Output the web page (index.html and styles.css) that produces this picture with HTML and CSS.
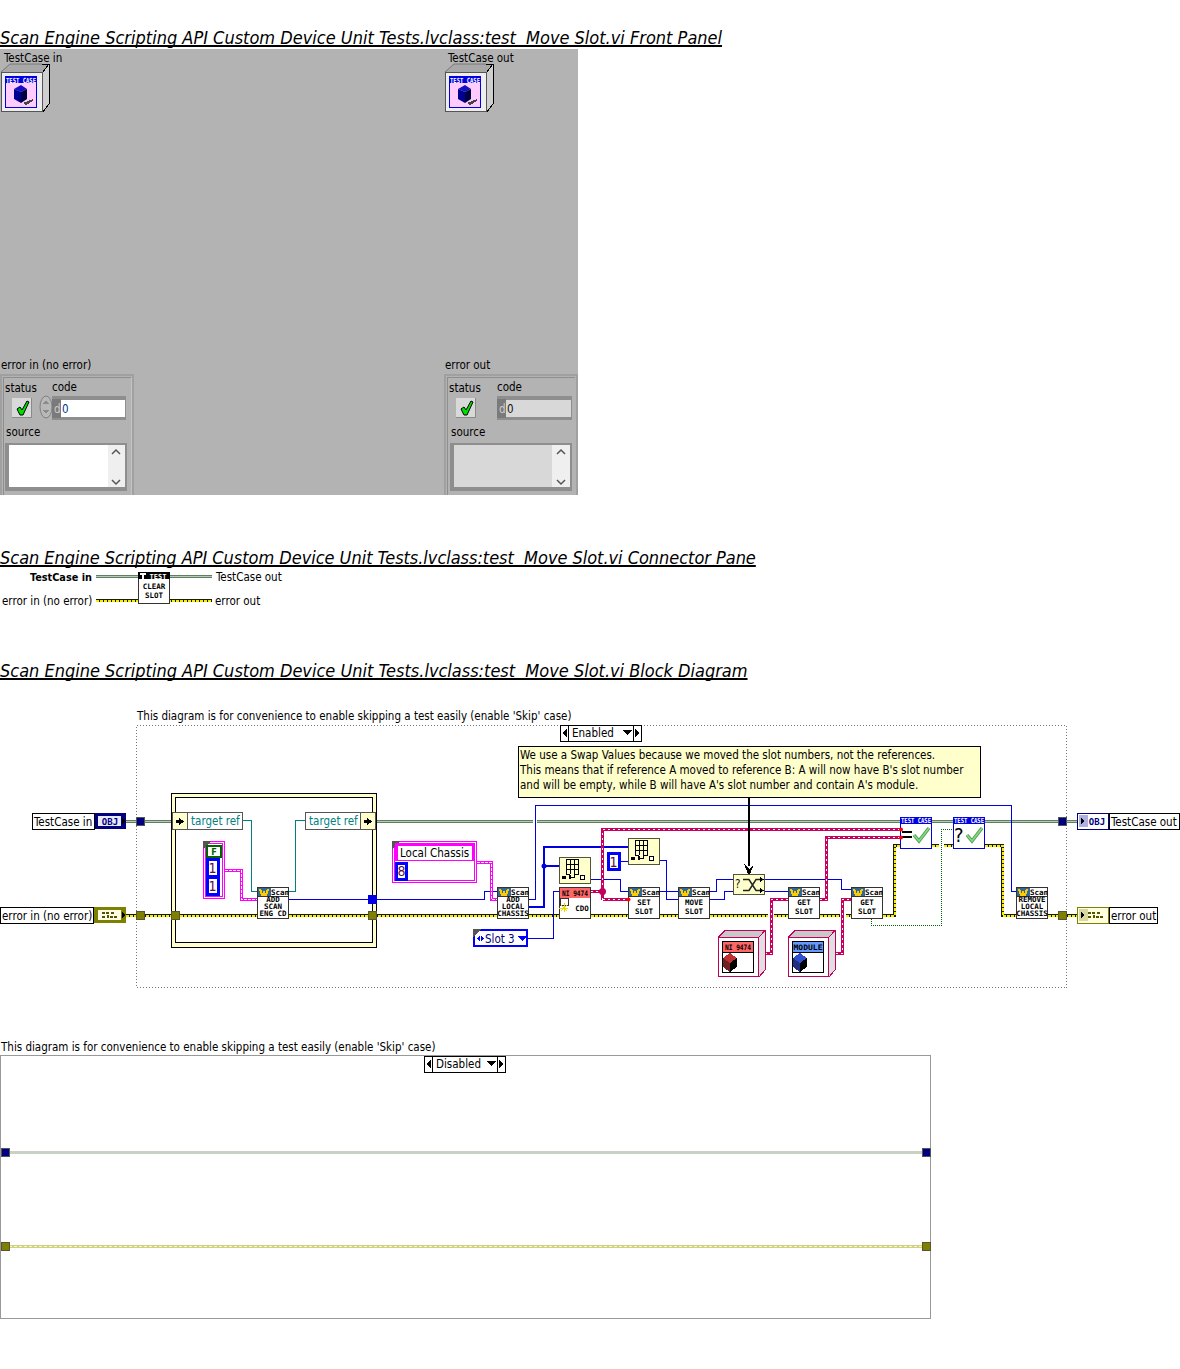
FILE: index.html
```html
<!DOCTYPE html>
<html lang="en">
<head>
<meta charset="utf-8">
<title>test_Move Slot.vi</title>
<link rel="stylesheet" href="styles.css">
</head>
<body>
<main class="report">
<h2 class="vi-title first">Scan Engine Scripting API Custom Device Unit Tests.lvclass:test  Move Slot.vi Front Panel</h2>
<svg class="canvas panel-canvas" viewBox="0 49 1180 446" width="1180" height="446" xmlns="http://www.w3.org/2000/svg">
  <defs>
    <g id="tc-indicator">
      <path class="box-top" d="M1 72 L10 64 H49 L43 72 Z"/>
      <path class="box-side" d="M43 72 L49 64 V104 L43 112 Z"/>
      <path class="edge-soft" d="M1 72 L10 64 H42"/>
      <path class="line" d="M42 64 H49 L43 72 M49 64 V104 L43 112"/>
      <rect class="box-front" x="1.500" y="72.500" width="41" height="39"/>
      <rect class="tc-img" x="5.500" y="76.500" width="31" height="31"/>
      <rect class="fill-blue" x="5" y="76" width="32" height="7"/>
      <text class="tiny-w" x="21" y="82.500" textLength="30" lengthAdjust="spacingAndGlyphs">TEST CASE</text>
      <path class="cube-top" d="M21 85 L27 89 L21 92 L14 89 Z"/>
      <path class="cube-left" d="M14 89 L21 92 V103 L14 99 Z"/>
      <path class="cube-right" d="M27 89 L21 92 V103 L27 99 Z"/>
      <path class="shadow" d="M23 103 L33 99 V101 L26 105 Z"/>
    </g>
    <g id="check">
      <path class="check-mark" d="M3 9 L6 7 L8 10 L13 1 L15 2 L9 15 L6 15 Z"/>
    </g>
    <path id="up" class="chev" d="M0 4 L4 0 L8 4"/>
    <path id="down" class="chev" d="M0 0 L4 4 L8 0"/>
  </defs>
  <rect class="panel-bg" x="0" y="49" width="578" height="446"/>

  <text class="t12" x="4" y="62">TestCase in</text>
  <use href="#tc-indicator"/>
  <text class="t12" x="448" y="62">TestCase out</text>
  <use href="#tc-indicator" x="444"/>

  <!-- error in -->
  <text class="t12" x="1" y="369">error in (no error)</text>
  <path class="bevel-hi" d="M1 495 V375 H133 V495"/>
  <path class="bevel-dk" d="M3 495 V377.500 H131"/>
  <path class="bevel-lt" d="M131.500 378 V495"/>
  <text class="t12" x="5" y="392">status</text>
  <text class="t12" x="52" y="391">code</text>
  <rect class="btn" x="12" y="398" width="19" height="19"/>
  <path class="btn-shade" d="M12 417.500 H31.500 V398"/>
  <use href="#check" x="14" y="400"/>
  <ellipse class="spin" cx="46" cy="407" rx="6" ry="11"/>
  <path class="spin-arrow" d="M46 400 L43 404 H49 Z M46 414 L43 410 H49 Z"/>
  <rect class="field-bevel" x="52" y="396" width="74" height="24"/>
  <rect class="field-radix" x="52" y="399" width="9" height="19"/>
  <rect class="field-white" x="61" y="400" width="64" height="17"/>
  <text class="t12-gray" x="54" y="413">d</text>
  <text class="t12-blue" x="62" y="413">0</text>
  <text class="t12" x="6" y="436">source</text>
  <rect class="field-bevel" x="5" y="443" width="122" height="48"/>
  <rect class="field-white" x="9" y="445" width="99" height="42"/>
  <rect class="scroll" x="108" y="445" width="17" height="42"/>
  <use href="#up" x="112" y="450"/>
  <use href="#down" x="112" y="480"/>

  <!-- error out -->
  <text class="t12" x="445" y="369">error out</text>
  <path class="bevel-hi" d="M445 495 V375 H577 V495"/>
  <path class="bevel-dk" d="M447 495 V377.500 H575"/>
  <text class="t12" x="449" y="392">status</text>
  <text class="t12" x="497" y="391">code</text>
  <rect class="btn" x="456" y="398" width="19" height="19"/>
  <path class="btn-shade" d="M456 417.500 H475.500 V398"/>
  <use href="#check" x="458" y="400"/>
  <rect class="field-bevel" x="497" y="396" width="75" height="24"/>
  <rect class="field-radix" x="497" y="399" width="9" height="19"/>
  <rect class="field-ind" x="506" y="400" width="65" height="17"/>
  <text class="t12-gray" x="499" y="413">d</text>
  <text class="t12-dk" x="507" y="413">0</text>
  <text class="t12" x="451" y="436">source</text>
  <rect class="field-bevel" x="450" y="443" width="122" height="48"/>
  <rect class="field-ind" x="454" y="445" width="98" height="42"/>
  <rect class="scroll" x="552" y="445" width="18" height="42"/>
  <use href="#up" x="557" y="450"/>
  <use href="#down" x="557" y="480"/>
</svg>

<h2 class="vi-title second">Scan Engine Scripting API Custom Device Unit Tests.lvclass:test  Move Slot.vi Connector Pane</h2>
<svg class="canvas pane-canvas" viewBox="0 568 1180 42" width="1180" height="42" xmlns="http://www.w3.org/2000/svg">
  <text class="t12-b" x="30" y="581">TestCase in</text>
  <text class="t12" x="216" y="581">TestCase out</text>
  <text class="t12" x="2" y="605">error in (no error)</text>
  <text class="t12" x="215" y="605">error out</text>
  <path class="w-obj" d="M96 576.500 H212"/>
  <path class="w-obj-c" d="M96 576.500 H212"/>
  <path class="w-err" d="M96 600.500 H212"/>
  <path class="w-err-c" d="M96 600.500 H212"/>
  <rect class="node" x="138.500" y="572.500" width="31" height="31"/>
  <rect class="fill-black" x="138" y="572" width="32" height="7"/>
  <path class="pane-t" d="M140 573 H146 V575 H144 V582 H142 V575 H140 Z"/>
  <text class="tiny-w" x="158" y="578.500">TEST</text>
  <text class="mono" x="154" y="589">CLEAR</text>
  <text class="mono" x="154" y="598">SLOT</text>
</svg>

<h2 class="vi-title third">Scan Engine Scripting API Custom Device Unit Tests.lvclass:test  Move Slot.vi Block Diagram</h2>
<svg class="canvas diagram-canvas" viewBox="0 681 1180 320" width="1180" height="320" xmlns="http://www.w3.org/2000/svg">
  <defs>
    <g id="scan-head">
      <rect class="head-bg" x="0.500" y="0.500" width="31" height="9"/>
      <rect class="head-blue" x="1" y="1" width="13" height="8"/>
      <path class="head-v" d="M3 2 L5 8 H6 L7 4 L8 8 H9 L11 2" />
      <text class="tiny-k" x="23" y="8">Scan</text>
    </g>
    <g id="array-node">
      <rect class="y-node" x="0.500" y="0.500" width="31" height="26"/>
      <path class="grid" d="M7 2.500 H19 V17 H15 V20 H10 V17 H7 Z M7 7 H19 M7 12 H19 M11 2.500 V17 M15 2.500 V17"/>
      <rect class="fill-black" x="3" y="19" width="4" height="3"/>
      <path class="grid" d="M10 21 H12 M11 18 V21"/>
      <rect class="open-sq" x="21.500" y="18.500" width="4" height="4"/>
    </g>
    <g id="const-box">
      <path class="box-top-c" d="M0 7 L7 0 H47 L41 7 Z"/>
      <path class="box-side-c" d="M41 7 L47 0 V40 L41 47 Z"/>
      <path class="rim" d="M0.500 7 L7 0.500 H47 L41 7 M47 0.500 V40 L41 47"/>
      <rect class="rim-front" x="0.500" y="7.500" width="40" height="39"/>
      <rect class="cell" x="4.500" y="11.500" width="31" height="31"/>
    </g>
    <path id="arrow-r" class="fill-black" d="M0 0 L5 4 L0 8 Z"/>
    <path id="arrow-l" class="fill-black" d="M5 0 L0 4 L5 8 Z"/>
    <g id="tunnel-blue"><rect class="tun-b" x="0.500" y="0.500" width="8" height="8"/></g>
    <g id="tunnel-err"><rect class="tun-e" x="0.500" y="0.500" width="8" height="8"/></g>
  </defs>

  <text class="t12" x="137" y="720">This diagram is for convenience to enable skipping a test easily (enable 'Skip' case)</text>
  <rect class="frame-dots" x="136.500" y="725.500" width="930" height="262"/>

  <!-- selector -->
  <rect class="sel" x="560.500" y="725.500" width="81" height="16"/>
  <path class="line" d="M568.500 725 V741 M633.500 725 V741"/>
  <use href="#arrow-l" x="562" y="729"/>
  <use href="#arrow-r" x="635" y="729"/>
  <text class="t12" x="572" y="737">Enabled</text>
  <path class="fill-black" d="M623 730 H632 L627.500 735 Z"/>

  <!-- comment -->
  <rect class="comment" x="518.500" y="746.500" width="462" height="51"/>
  <text class="t12" x="520" y="759">We use a Swap Values because we moved the slot numbers, not the references.</text>
  <text class="t12" x="520" y="774">This means that if reference A moved to reference B: A will now have B's slot number</text>
  <text class="t12" x="520" y="789">and will be empty, while B will have A's slot number and contain A's module.</text>

  <!-- main wires -->
  <path class="w-obj" d="M126 821.500 H171 M377 821.500 H533 M537 821.500 H1077"/>
  <path class="w-obj-c" d="M126 821.500 H171 M377 821.500 H533 M537 821.500 H1077"/>
  <path class="w-err" d="M126 915.500 H497 M529 915.500 H559 M591 915.500 H628 M660 915.500 H678 M710 915.500 H768 M774 915.500 H788 M820 915.500 H840 M846 915.500 H851 M883 915.500 H894.500 V845.500 H900 M932 845.500 H939 M944 845.500 H953 M985 845.500 H1002.500 V915.500 H1016 M1048 915.500 H1077"/>
  <path class="w-err-c" d="M126 915.500 H497 M529 915.500 H559 M591 915.500 H628 M660 915.500 H678 M710 915.500 H768 M774 915.500 H788 M820 915.500 H840 M846 915.500 H851 M883 915.500 H894.500 V845.500 H900 M932 845.500 H939 M944 845.500 H953 M985 845.500 H1002.500 V915.500 H1016 M1048 915.500 H1077"/>

  <!-- frame / structure -->
  <rect class="struct" x="171.500" y="793.500" width="205" height="154"/>
  <rect class="struct-in" x="175.500" y="797.500" width="197" height="145"/>
  <path class="w-err" d="M176 915.500 H258 M289 915.500 H372"/>
  <path class="w-err-c" d="M176 915.500 H258 M289 915.500 H372"/>

  <!-- property nodes -->
  <rect class="prop-arrow" x="172.500" y="812.500" width="15" height="17"/>
  <rect class="prop-name" x="187.500" y="812.500" width="55" height="17"/>
  <path class="fill-black" d="M176 820 H179 V818 L184 821.500 L179 825 V823 H176 Z"/>
  <text class="t12-teal" x="191" y="825">target ref</text>
  <rect class="prop-name" x="305.500" y="812.500" width="55" height="17"/>
  <rect class="prop-arrow" x="360.500" y="812.500" width="15" height="17"/>
  <path class="fill-black" d="M364 820 H367 V818 L372 821.500 L367 825 V823 H364 Z"/>
  <text class="t12-teal" x="309" y="825">target ref</text>

  <!-- thin wires -->
  <path class="w-teal" d="M243 820.500 H251.500 V891.500 H258 M288 891.500 H295.500 V820.500 H305"/>
  <path class="w-ref" d="M289 899.500 H372 M377 899.500 H484.500 V891.500 H497"/>
  <path class="w-ref" d="M529 899.500 H535.500 V805.500 H1011.500 V891.500 H1016"/>
  <path class="w-ref-b" d="M529 906.500 H544 V847 H628"/>
  <path class="w-ref-b" d="M544 866 H559"/>
  <circle class="dot-b" cx="544" cy="866" r="2.500"/>
  <path class="w-ref" d="M591 879.500 H620.500 V891.500 H628"/>
  <path class="w-ref" d="M620 861.500 H628"/>
  <path class="w-ref" d="M660 860.500 H666.500 V899.500 H678"/>
  <path class="w-ref" d="M660 891.500 H678"/>
  <path class="w-ref" d="M710 891.500 H716.500 V879.500 H733"/>
  <path class="w-ref" d="M710 899.500 H724.500 V891.500 H733"/>
  <path class="w-ref" d="M765 879.500 H841.500 V889.500 H851"/>
  <path class="w-ref" d="M765 891.500 H788"/>
  <path class="w-ref" d="M528 938.500 H553.500 V891.500 H559"/>
  <path class="w-dot-g" d="M871.500 919 V925.500 H941.500 V829.500 H953"/>

  <!-- class wires -->
  <g>
    <path class="w-cls" d="M591 891.500 H602.500 M602.500 899.500 H628 M602.500 899.500 V829.500 H900 M820 899.500 H826.500 V837.500 H900 M765 953.500 H771.500 V899.500 H788 M836 953.500 H842.500 V899.500 H851"/>
    <path class="w-cls-c" d="M591 891.500 H602.500 M602.500 899.500 H628 M602.500 899.500 V829.500 H900 M820 899.500 H826.500 V837.500 H900 M765 953.500 H771.500 V899.500 H788 M836 953.500 H842.500 V899.500 H851"/>
    <circle class="dot-c" cx="602.500" cy="891.500" r="3.500"/>
  </g>
  <!-- cluster wires -->
  <path class="w-pink" d="M225 870.500 H241.500 V899.500 H258"/>
  <path class="w-pink-c" d="M225 870.500 H241.500 V899.500 H258"/>
  <path class="w-pink" d="M477 862.500 H491.500 V899.500 H497"/>
  <path class="w-pink-c" d="M477 862.500 H491.500 V899.500 H497"/>

  <!-- comment arrow -->
  <path class="w-black" d="M749 797 V866"/>
  <path class="fill-black" d="M744 864 L749 869 L754 864 L750 874 H748 Z"/>

  <!-- cluster constant -->
  <rect class="clu" x="203.500" y="841.500" width="21" height="57"/>
  <rect class="clu-in" x="205.500" y="843.500" width="17" height="53"/>
  <path class="corner" d="M203 841 H211 L203 849 Z"/>
  <rect class="bool" x="207" y="846" width="14" height="11"/>
  <text class="bool-t" x="214" y="855">F</text>
  <rect class="num-blue" x="207.500" y="859.500" width="11" height="17"/>
  <rect class="num-blue" x="207.500" y="877.500" width="11" height="17"/>
  <text class="t14-purple" x="212.500" y="873">1</text>
  <text class="t14-purple" x="212.500" y="891">1</text>

  <!-- local chassis constant -->
  <rect class="clu" x="392.500" y="841.500" width="84" height="41"/>
  <rect class="clu-in" x="394.500" y="843.500" width="80" height="37"/>
  <path class="corner" d="M392 841 H400 L392 849 Z"/>
  <rect class="pink-band" x="395" y="843" width="79" height="18"/>
  <rect class="cell-plain" x="398" y="846" width="74" height="14"/>
  <text class="t12" x="400" y="857">Local Chassis</text>
  <rect class="num-blue" x="396.500" y="863.500" width="10" height="16"/>
  <text class="t14-purple" x="401.500" y="876">8</text>

  <!-- slot ring -->
  <rect class="ring" x="474" y="930" width="53" height="16"/>
  <path class="corner" d="M473 929 H481 L473 937 Z"/>
  <path class="blue-fill" d="M477 938.500 L480 935 V942 Z M484 938.500 L481 935 V942 Z"/>
  <text class="t12-navy" x="485" y="943">Slot 3</text>
  <path class="blue-fill" d="M518 936 H527 L522.500 941 Z"/>

  <!-- tunnels -->
  <use href="#tunnel-blue" x="136" y="817"/>
  <use href="#tunnel-err" x="136" y="911"/>
  <use href="#tunnel-err" x="171" y="911"/>
  <use href="#tunnel-err" x="368" y="911"/>
  <rect class="tun-sb" x="368" y="895" width="9" height="9"/>
  <use href="#tunnel-blue" x="1058" y="817"/>
  <use href="#tunnel-err" x="1058" y="911"/>

  <!-- scan nodes -->
  <g transform="translate(257 887)">
    <rect class="node" x="0.500" y="0.500" width="31" height="31"/>
    <use href="#scan-head"/>
    <text class="mono" x="16" y="15">ADD</text><text class="mono" x="16" y="22">SCAN</text><text class="mono" x="16" y="29">ENG CD</text>
  </g>
  <g transform="translate(497 887)">
    <rect class="node" x="0.500" y="0.500" width="31" height="31"/>
    <use href="#scan-head"/>
    <text class="mono" x="16" y="15">ADD</text><text class="mono" x="16" y="22">LOCAL</text><text class="mono" x="16" y="29">CHASSIS</text>
  </g>
  <g transform="translate(628 887)">
    <rect class="node" x="0.500" y="0.500" width="31" height="31"/>
    <use href="#scan-head"/>
    <text class="mono" x="16" y="18">SET</text><text class="mono" x="16" y="27">SLOT</text>
  </g>
  <g transform="translate(678 887)">
    <rect class="node" x="0.500" y="0.500" width="31" height="31"/>
    <use href="#scan-head"/>
    <text class="mono" x="16" y="18">MOVE</text><text class="mono" x="16" y="27">SLOT</text>
  </g>
  <g transform="translate(788 887)">
    <rect class="node" x="0.500" y="0.500" width="31" height="31"/>
    <use href="#scan-head"/>
    <text class="mono" x="16" y="18">GET</text><text class="mono" x="16" y="27">SLOT</text>
  </g>
  <g transform="translate(851 887)">
    <rect class="node" x="0.500" y="0.500" width="31" height="31"/>
    <use href="#scan-head"/>
    <text class="mono" x="16" y="18">GET</text><text class="mono" x="16" y="27">SLOT</text>
  </g>
  <g transform="translate(1016 887)">
    <rect class="node" x="0.500" y="0.500" width="31" height="31"/>
    <use href="#scan-head"/>
    <text class="mono" x="16" y="15">REMOVE</text><text class="mono" x="16" y="22">LOCAL</text><text class="mono" x="16" y="29">CHASSIS</text>
  </g>

  <!-- CDO node -->
  <g transform="translate(559 887)">
    <rect class="node" x="0.500" y="0.500" width="31" height="31"/>
    <rect class="head-red" x="1" y="1" width="30" height="10"/>
    <text class="mono" x="16" y="8.500" textLength="26" lengthAdjust="spacingAndGlyphs">NI 9474</text>
    <rect class="open-sq-t" x="1" y="11" width="8" height="7"/>
    <path class="star" d="M0 21 H9 M5 16 V25 M2 18 L8 24 M8 18 L2 24"/>
    <text class="mono" x="23" y="24">CDO</text>
  </g>

  <!-- array nodes -->
  <use href="#array-node" x="559" y="857"/>
  <use href="#array-node" x="628" y="838"/>
  <rect class="num-blue" x="608.500" y="853.500" width="11" height="16"/>
  <text class="t14-purple" x="613.500" y="867">1</text>

  <!-- swap -->
  <rect class="y-node" x="733.500" y="874.500" width="31" height="20"/>
  <path class="swap" d="M743 879.500 H749 L756 890.500 H763 M743 890.500 H749 L756 879.500 H763"/>
  <path class="fill-black" d="M760 877 L764 879.500 L760 882 Z M760 888 L764 890.500 L760 893 Z"/>
  <text class="t12-dk" x="735" y="888">?</text>

  <!-- assert nodes -->
  <g transform="translate(900 817)">
    <rect class="node-b" x="0.500" y="0.500" width="31" height="31"/>
    <rect class="fill-blue" x="0" y="0" width="32" height="7"/>
    <text class="tiny-w" x="16" y="6" textLength="30" lengthAdjust="spacingAndGlyphs">TEST CASE</text>
    <path class="eq" d="M2 15 H12 M2 20 H12"/>
    <path class="tick" d="M14 18 L19 24 L29 11" />
    <path class="tick-c" d="M14 18 L19 24 L29 11" />
    <circle class="dot-r" cx="1" cy="12.500" r="2"/>
    <circle class="dot-r" cx="1" cy="20.500" r="2"/>
  </g>
  <g transform="translate(953 817)">
    <rect class="node-b" x="0.500" y="0.500" width="31" height="31"/>
    <rect class="fill-blue" x="0" y="0" width="32" height="7"/>
    <text class="tiny-w" x="16" y="6" textLength="30" lengthAdjust="spacingAndGlyphs">TEST CASE</text>
    <text class="q-mark" x="1" y="25">?</text>
    <path class="tick" d="M14 18 L19 24 L29 11" />
    <path class="tick-c" d="M14 18 L19 24 L29 11" />
  </g>
  <circle class="dot-r" cx="628.500" cy="899.500" r="2"/>

  <!-- class constants -->
  <g transform="translate(718 930)">
    <use href="#const-box"/>
    <rect class="head-red" x="5" y="12" width="30" height="10"/>
    <path class="line" d="M5 22.500 H36"/>
    <text class="mono" x="20" y="20" textLength="26" lengthAdjust="spacingAndGlyphs">NI 9474</text>
    <path class="cr-top" d="M5 28 L12 23 L19 28 L12 33 Z"/>
    <path class="cr-left" d="M5 28 L12 33 V42 L5 37 Z"/>
    <path class="fill-black" d="M19 28 L12 33 V42 L19 37 Z"/>
  </g>
  <g transform="translate(788 930)">
    <use href="#const-box"/>
    <rect class="head-sky" x="5" y="12" width="30" height="10"/>
    <path class="line" d="M5 22.500 H36"/>
    <text class="mono" x="20" y="20" textLength="29" lengthAdjust="spacingAndGlyphs">MODULE</text>
    <path class="cb-top" d="M5 28 L12 23 L19 28 L12 33 Z"/>
    <path class="cb-left" d="M5 28 L12 33 V42 L5 37 Z"/>
    <path class="fill-black" d="M19 28 L12 33 V42 L19 37 Z"/>
  </g>

  <!-- terminals -->
  <rect class="lbl" x="32.500" y="813.500" width="62" height="16"/>
  <text class="t12" x="34" y="826">TestCase in</text>
  <rect class="term-b" x="95" y="813" width="31" height="16"/>
  <rect class="term-bi" x="97.500" y="815.500" width="24" height="11"/>
  <text class="obj" x="110" y="825">OBJ</text>
  <path class="fill-black" d="M122 818 L125 821 L122 824 Z"/>

  <rect class="lbl" x="0.500" y="907.500" width="93" height="16"/>
  <text class="t12" x="2" y="920">error in (no error)</text>
  <rect class="term-e" x="94" y="907" width="32" height="16"/>
  <rect class="term-ei" x="97.500" y="909.500" width="24" height="11"/>
  <path class="term-icon" d="M102 913 H108 V917 H117 M102 917 H106 M111 913 H115"/>
  <path class="fill-black" d="M122 912 L125 915 L122 918 Z"/>

  <rect class="term-out-b" x="1077.500" y="813.500" width="31" height="16"/>
  <rect class="term-shade-b" x="1079" y="815" width="9" height="12"/>
  <path class="fill-black" d="M1081 818 L1084 821 L1081 824 Z"/>
  <text class="obj" x="1097" y="825">OBJ</text>
  <rect class="lbl" x="1109.500" y="813.500" width="70" height="16"/>
  <text class="t12" x="1111" y="826">TestCase out</text>

  <rect class="term-out-e" x="1077.500" y="907.500" width="31" height="16"/>
  <rect class="term-shade-e" x="1079" y="909" width="9" height="12"/>
  <path class="fill-black" d="M1081 912 L1084 915 L1081 918 Z"/>
  <path class="term-icon" d="M1088 913 H1094 V917 H1103 M1088 917 H1092 M1097 913 H1101"/>
  <rect class="lbl" x="1109.500" y="907.500" width="48" height="16"/>
  <text class="t12" x="1111" y="920">error out</text>
</svg>

<svg class="canvas case-canvas" viewBox="0 1040 1180 329" width="1180" height="329" xmlns="http://www.w3.org/2000/svg">
  <text class="t12" x="1" y="1051">This diagram is for convenience to enable skipping a test easily (enable 'Skip' case)</text>
  <rect class="frame-solid" x="0.500" y="1055.500" width="930" height="263"/>
  <rect class="sel" x="424.500" y="1056.500" width="81" height="16"/>
  <path class="line" d="M432.500 1056 V1072 M497.500 1056 V1072"/>
  <use href="#arrow-l" x="426" y="1060"/>
  <use href="#arrow-r" x="499" y="1060"/>
  <text class="t12" x="436" y="1068">Disabled</text>
  <path class="fill-black" d="M487 1061 H496 L491.500 1066 Z"/>
  <path class="w-obj-off" d="M9 1152.500 H922"/>
  <path class="w-err-off" d="M9 1246.500 H922"/>
  <path class="w-err-off-c" d="M9 1246.500 H922"/>
  <use href="#tunnel-blue" x="1" y="1148"/>
  <use href="#tunnel-blue" x="922" y="1148"/>
  <use href="#tunnel-err" x="1" y="1242"/>
  <use href="#tunnel-err" x="922" y="1242"/>
</svg>
</main>
</body>
</html>
```

FILE: styles.css
```css
* { box-sizing: border-box; }
html, body { margin: 0; padding: 0; background: #fff; }
body { font-family: "DejaVu Sans", "Noto Sans", sans-serif; font-stretch: condensed; }
.report { width: 1180px; height: 1369px; overflow: hidden; }
.vi-title {
  margin: 0; height: 20px; font-size: 18px; line-height: 20px; font-weight: 400; font-style: italic;
  white-space: pre; color: #000; font-family: "DejaVu Sans", sans-serif; font-stretch: condensed;
  text-decoration: underline; text-decoration-thickness: 2px; text-underline-offset: 1px;
  text-decoration-skip-ink: none;
}
.first { margin-top: 28px; margin-bottom: 1px; }
.second { margin-top: 53px; letter-spacing: -0.03px; }
.third { margin-top: 51px; letter-spacing: -0.01px; }
.canvas { display: block; }
.case-canvas { margin-top: 39px; }

.canvas rect, .canvas path { shape-rendering: crispEdges; }
.canvas path.tick, .canvas path.tick-c, .canvas path.check-mark, .canvas path.chev, .canvas path.swap,
.canvas path.cube-top, .canvas path.cube-left, .canvas path.cube-right, .canvas path.box-top, .canvas path.box-side,
.canvas path.edge-soft { shape-rendering: auto; }

text { font-family: "DejaVu Sans", sans-serif; font-stretch: condensed; font-size: 11.500px; fill: #000; white-space: pre; }
.t12 { fill: #000; }
.t12-b { font-weight: 700; font-size: 10.800px; }
.t12-gray { fill: #ccc; }
.t12-blue { fill: #003399; }
.t12-dk { fill: #111; }
.t12-teal { fill: #008080; }
.t12-navy { fill: #000080; }
.t14-purple { font-size: 14px; fill: #5a1040; text-anchor: middle; }
.tiny-w { font-size: 7px; font-weight: 700; fill: #fff; text-anchor: middle; font-family: "DejaVu Sans Mono", monospace; }
.tiny-k { font-size: 7.500px; font-weight: 700; fill: #000; text-anchor: middle; font-family: "DejaVu Sans Mono", monospace; }
.mono { font-size: 7.500px; fill: #000; text-anchor: middle; font-family: "DejaVu Sans Mono", monospace; font-weight: 700; }
.obj { font-size: 9px; font-weight: 700; fill: #000080; text-anchor: middle; font-family: "DejaVu Sans Mono", monospace; }
.bool-t { font-size: 9px; font-weight: 700; fill: #006400; text-anchor: middle; }
.q-mark { font-size: 20px; fill: #000; }

.panel-bg { fill: #b3b3b3; }
.line { fill: none; stroke: #000; stroke-width: 1; }
.edge-soft { fill: none; stroke: #777; stroke-width: 1; }
.fill-black { fill: #000; }
.fill-blue { fill: #0000e0; }
.blue-fill { fill: #0000ff; }
.box-top { fill: #a8a8a8; }
.box-side { fill: #cfcfcf; }
.box-front { fill: #eee; stroke: #555; stroke-width: 1; }
.tc-img { fill: #ffccff; stroke: #0000e0; stroke-width: 1; }
.cube-top { fill: #1010c0; }
.cube-left { fill: #000090; }
.cube-right { fill: #000040; }
.shadow { fill: #444; }
.check-mark { fill: #00e000; stroke: #000; stroke-width: 1; }
.chev { fill: none; stroke: #555; stroke-width: 1.500; }

.bevel-hi { fill: none; stroke: #a0a0a0; stroke-width: 2; }
.bevel-dk { fill: none; stroke: #8e8e8e; stroke-width: 1; }
.bevel-lt { fill: none; stroke: #c4c4c4; stroke-width: 1; }
.btn { fill: #d9d9d9; }
.btn-shade { fill: none; stroke: #8a8a8a; stroke-width: 1; }
.spin { fill: #b8b8b8; stroke: #808080; stroke-width: 1; }
.spin-arrow { fill: #8a8a8a; }
.field-bevel { fill: #8e8e8e; }
.field-radix { fill: #7a7a7a; }
.field-white { fill: #fff; }
.field-ind { fill: #d8d8d8; }
.scroll { fill: #efefef; }

.w-obj { fill: none; stroke: #5f8060; stroke-width: 3; }
.w-obj-c { fill: none; stroke: #b9c9b9; stroke-width: 1; }
.w-obj-off { fill: none; stroke: #c9d1c4; stroke-width: 3; }
.w-err { fill: none; stroke: #1a1a00; stroke-width: 3; }
.w-err-c { fill: none; stroke: #f4f000; stroke-width: 2; stroke-dasharray: 3 1; }
.w-err-off { fill: none; stroke: #cfcf90; stroke-width: 3; }
.w-err-off-c { fill: none; stroke: #ffff99; stroke-width: 1; stroke-dasharray: 3 2; }
.w-teal { fill: none; stroke: #008080; stroke-width: 1; }
.w-ref { fill: none; stroke: #0000e0; stroke-width: 1; }
.w-ref-b { fill: none; stroke: #0000e0; stroke-width: 2; }
.dot-b { fill: #0000e0; }
.w-dot-g { fill: none; stroke: #006400; stroke-width: 1; stroke-dasharray: 1 1; }
.w-cls { fill: none; stroke: #c8005f; stroke-width: 3; }
.w-cls-c { fill: none; stroke: #fff; stroke-width: 1; stroke-dasharray: 2 3; }
.dot-c { fill: #c0005a; }
.dot-r { fill: #ff0000; }
.w-pink { fill: none; stroke: #ff00ff; stroke-width: 3; }
.w-pink-c { fill: none; stroke: #fff; stroke-width: 1; stroke-dasharray: 3 1; }
.w-black { fill: none; stroke: #000; stroke-width: 2; }

.frame-dots { fill: none; stroke: #777; stroke-width: 1; stroke-dasharray: 1 2; }
.frame-solid { fill: #fff; stroke: #999; stroke-width: 1; }
.sel { fill: #fff; stroke: #000; stroke-width: 1; }
.comment { fill: #ffffcc; stroke: #000; stroke-width: 1; }
.struct { fill: #ffffcc; stroke: #000; stroke-width: 1; }
.struct-in { fill: #fff; stroke: #000; stroke-width: 1; }
.prop-arrow { fill: #ffffcc; stroke: #555; stroke-width: 1; }
.prop-name { fill: #fff; stroke: #555; stroke-width: 1; }

.node { fill: #fff; stroke: #333; stroke-width: 1; }
.node-b { fill: #fff; stroke: #0000e0; stroke-width: 1; }
.head-bg { fill: #fff; stroke: #333; stroke-width: 1; }
.head-blue { fill: #336699; }
.head-v { fill: none; stroke: #ffcc00; stroke-width: 2; }
.head-red { fill: #ff6666; }
.head-sky { fill: #6699ff; }
.open-sq-t { fill: #fff; stroke: #333; stroke-width: 1; }
.star { fill: none; stroke: #e8d800; stroke-width: 1; }
.y-node { fill: #ffffcc; stroke: #555533; stroke-width: 1; }
.grid { fill: none; stroke: #000; stroke-width: 1; }
.open-sq { fill: #fff; stroke: #000; stroke-width: 1; }
.swap { fill: none; stroke: #222; stroke-width: 1.500; }
.eq { fill: none; stroke: #000; stroke-width: 2; }
.tick { fill: none; stroke: #5a9a5a; stroke-width: 3.500; }
.tick-c { fill: none; stroke: #7fe07f; stroke-width: 1.500; }
.pane-t { fill: #fff; }

.clu { fill: #fff; stroke: #ff00ff; stroke-width: 1; }
.clu-in { fill: #fff; stroke: #ff00ff; stroke-width: 1; }
.corner { fill: #555; }
.bool { fill: #fff; stroke: #006400; stroke-width: 2; }
.num-blue { fill: #fff; stroke: #0000ff; stroke-width: 3; }
.pink-band { fill: #ff00ff; }
.ring { fill: #fff; stroke: #0000ff; stroke-width: 2; }
.cell { fill: #fff; stroke: #000; stroke-width: 1; }
.cell-plain { fill: #fff; }

.box-top-c { fill: #c8c8c8; }
.box-side-c { fill: #e0e0e0; }
.rim { fill: none; stroke: #c0005a; stroke-width: 1; }
.rim-front { fill: #fff; stroke: #c0005a; stroke-width: 1.500; }
.cr-top { fill: #c03030; }
.cr-left { fill: #702020; }
.cb-top { fill: #3050d0; }
.cb-left { fill: #202f80; }

.tun-b { fill: #000080; stroke: #555; stroke-width: 1; }
.tun-sb { fill: #0000e0; }
.tun-e { fill: #808000; stroke: #555533; stroke-width: 1; }

.lbl { fill: #fff; stroke: #000; stroke-width: 1; }
.term-b { fill: #000080; }
.term-bi { fill: #e8eaf8; stroke: #000080; stroke-width: 1; }
.term-e { fill: #808000; }
.term-ei { fill: #fbfbe8; stroke: #808000; stroke-width: 1; }
.term-icon { fill: none; stroke: #555500; stroke-width: 2; stroke-dasharray: 3 1; }
.term-out-b { fill: #fff; stroke: #000080; stroke-width: 1; }
.term-shade-b { fill: #b0b0e0; }
.term-out-e { fill: #ffffe0; stroke: #808000; stroke-width: 1; }
.term-shade-e { fill: #d8d8a0; }
```
